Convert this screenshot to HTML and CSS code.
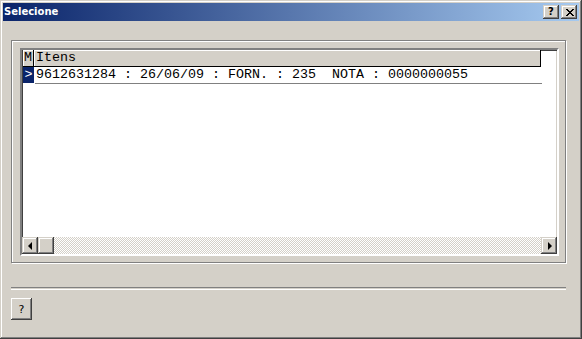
FILE: index.html
```html
<!DOCTYPE html>
<html lang="pt">

<head>
    <meta charset="UTF-8">
    <title>Selecione</title>
    <link rel="stylesheet" href="styles.css">
</head>

<body>

    <div class="window">
        <div class="titlebar">
            <span class="title">Selecione</span>
            <div class="caption-buttons">
                <div class="cap-btn help">?</div>
                <div class="cap-btn close">
                    <svg width="8" height="7" viewBox="0 0 8 7">
                        <path d="M0 0h2v1h-2zM6 0h2v1h-2zM1 1h2v1h-2zM5 1h2v1h-2zM2 2h4v1h-4zM3 3h2v1h-2zM2 4h4v1h-4zM1 5h2v1h-2zM5 5h2v1h-2zM0 6h2v1h-2zM6 6h2v1h-2z" fill="#000"/>
                    </svg>
                </div>
            </div>
        </div>

        <div class="content">
            <div class="frame">
                <div class="grid">
                    <div class="grid-head">
                        <div class="cell mark">M</div>
                        <div class="cell itens">Itens</div>
                    </div>
                    <div class="grid-row">
                        <div class="cell mark current">&gt;</div>
                        <div class="cell itens">9612631284 : 26/06/09 : FORN. : 235  NOTA : 0000000055</div>
                    </div>
                    <div class="grid-fill"></div>
                    <div class="hscroll">
                        <div class="sb-btn"><span class="arrow-left"></span></div>
                        <div class="sb-btn thumb"></div>
                        <div class="sb-track"></div>
                        <div class="sb-btn"><span class="arrow-right"></span></div>
                    </div>
                </div>
            </div>

            <div class="separator"></div>

            <div class="footer">
                <button class="btn-help" type="button">?</button>
            </div>
        </div>
    </div>

</body>
</html>
```

FILE: styles.css
```css
body {
    margin: 0;
    background-color: #d4d0c8;
    font-family: 'DejaVu Sans', 'Liberation Sans', sans-serif;
}

.window {
    width: 582px;
    height: 339px;
    box-sizing: border-box;
    padding: 3px;
    background-color: #d4d0c8;
    box-shadow: inset -1px -1px #404040, inset 1px 1px #d4d0c8, inset -2px -2px #808080, inset 2px 2px #ffffff;
    display: flex;
    flex-direction: column;
}

.titlebar {
    height: 18px;
    display: flex;
    align-items: center;
    justify-content: space-between;
    background: linear-gradient(to right, #0a246a, #a6caf0);
    padding: 0 2px 0 1px;
}

.title {
    color: #ffffff;
    font-weight: bold;
    font-size: 10px;
    line-height: 18px;
}

.caption-buttons {
    display: flex;
    gap: 2px;
}

.cap-btn {
    width: 16px;
    height: 14px;
    box-sizing: border-box;
    background-color: #d4d0c8;
    box-shadow: inset -1px -1px #404040, inset 1px 1px #d4d0c8, inset -2px -2px #808080, inset 2px 2px #ffffff;
    display: flex;
    align-items: center;
    justify-content: center;
}

.cap-btn.help {
    font-weight: bold;
    font-size: 10px;
    line-height: 14px;
    color: #000000;
}

.cap-btn.close svg {
    display: block;
    margin-left: 1px;
}

.content {
    flex: 1;
    display: flex;
    flex-direction: column;
    padding: 19px 0 0 8px;
}

.frame {
    width: 555px;
    height: 223px;
    box-sizing: border-box;
    border: 1px solid #808080;
    box-shadow: inset 1px 1px #ffffff, 1px 1px #ffffff;
    padding: 7px 0 0 8px;
}

.grid {
    width: 539px;
    height: 208px;
    box-sizing: border-box;
    border-style: solid;
    border-width: 2px;
    border-color: #808080 #ffffff #ffffff #808080;
    box-shadow: inset 1px 1px #404040, inset -1px -1px #d4d0c8;
    background-color: #ffffff;
    display: flex;
    flex-direction: column;
    font-family: 'Liberation Mono', 'DejaVu Sans Mono', monospace;
    font-size: 13.33px;
    color: #000000;
}

.grid-head,
.grid-row {
    display: flex;
    height: 17px;
    flex: none;
}

.cell {
    box-sizing: border-box;
    height: 17px;
    line-height: 16px;
    white-space: pre;
    overflow: hidden;
}

.cell.mark {
    width: 12px;
    text-align: center;
}

.cell.itens {
    width: 507px;
    padding-left: 2px;
}

.grid-head .cell {
    background-color: #d4d0c8;
    border-right: 1px solid #000000;
    border-bottom: 1px solid #000000;
    box-shadow: inset 1px 1px #ffffff;
}

.grid-head .cell.mark {
    margin-left: 1px;
    width: 11px;
}

.grid-row .cell.itens {
    border-bottom: 1px solid #808080;
    margin-left: 1px;
    padding-left: 1px;
}

.cell.current {
    background-color: #0a246a;
    color: #ffffff;
    height: 16px;
    margin-left: 1px;
    width: 11px;
}

.grid-fill {
    flex: 1;
}

.hscroll {
    height: 17px;
    display: flex;
    flex: none;
}

.sb-btn {
    width: 16px;
    height: 17px;
    box-sizing: border-box;
    background-color: #d4d0c8;
    box-shadow: inset -1px -1px #404040, inset 1px 1px #d4d0c8, inset -2px -2px #808080, inset 2px 2px #ffffff;
    display: flex;
    align-items: center;
    justify-content: center;
    flex: none;
}

.sb-track {
    flex: 1;
    background: repeating-conic-gradient(#ffffff 0 25%, #d4d0c8 0 50%) 0 0 / 2px 2px;
}

.arrow-left {
    width: 0;
    height: 0;
    border-top: 4px solid transparent;
    border-bottom: 4px solid transparent;
    border-right: 4px solid #000000;
    margin-left: -1px;
}

.arrow-right {
    width: 0;
    height: 0;
    border-top: 4px solid transparent;
    border-bottom: 4px solid transparent;
    border-left: 4px solid #000000;
    margin-left: 1px;
}

.separator {
    width: 555px;
    height: 1px;
    margin-top: 24px;
    border-top: 1px solid #808080;
    border-bottom: 1px solid #ffffff;
}

.footer {
    margin-top: 8px;
}

.btn-help {
    width: 21px;
    height: 22px;
    padding: 0;
    border: none;
    background-color: #d4d0c8;
    box-shadow: inset -1px -1px #404040, inset 1px 1px #ffffff, inset -2px -2px #808080, inset 2px 2px #d4d0c8;
    font-family: 'DejaVu Sans', 'Liberation Sans', sans-serif;
    font-size: 11px;
    color: #000000;
    display: block;
}
```
